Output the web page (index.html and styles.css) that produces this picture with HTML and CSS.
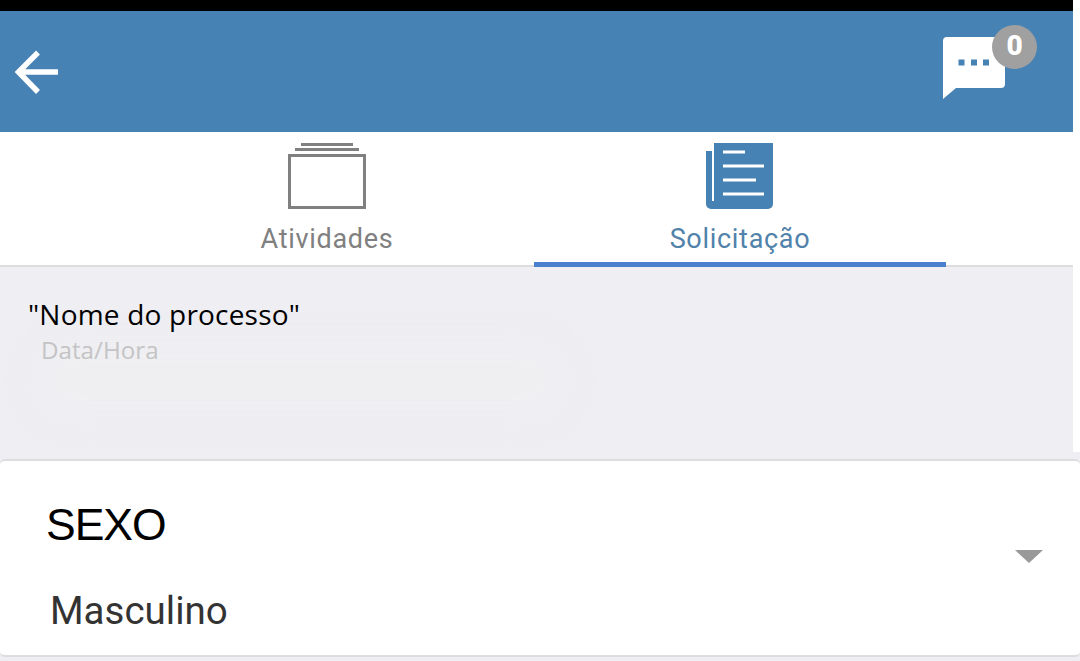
FILE: index.html
```html
<!DOCTYPE html>
<html>
  <head>
    <meta charset="UTF-8">
    <meta name="viewport" content="width=device-width, initial-scale=1.0">
    <title>Solicitação</title>
    <link rel="stylesheet" href="styles.css">
  </head>
  <body>
    <div class="upper">
      <div class="status-bar"></div>

      <header class="app-bar">
        <svg class="back-icon" width="46" height="48" viewBox="0 0 46 48">
          <path d="M44 23H5M24 3.500 4.500 23 24 43" fill="none" stroke="#fff" stroke-width="5.500"/>
        </svg>
        <div class="chat">
          <svg width="62" height="62" viewBox="0 0 62 62">
            <path d="M4 0H62V47a4 4 0 0 1-4 4H13L0 62V4a4 4 0 0 1 4-4Z" fill="#fff"/>
            <path d="M15.500 22.500h6v6h-6zM28 22.500h6v6h-6zM40 22.500h6v6h-6z" fill="#4682b4"/>
          </svg>
          <span class="badge">0</span>
        </div>
      </header>

      <nav class="tabs">
        <div class="tab">
          <svg width="78" height="66" viewBox="0 0 78 66">
            <path d="M13 1.500H65M7 6.500H71" fill="none" stroke="#808080" stroke-width="3"/>
            <rect x="1.500" y="12.500" width="75" height="52" fill="none" stroke="#808080" stroke-width="3"/>
          </svg>
          <span class="tab-label">Atividades</span>
        </div>
        <div class="tab tab-active">
          <svg width="68" height="66" viewBox="0 0 68 66">
            <path d="M8 0H67V61a5 5 0 0 1-5 5H5a5 5 0 0 1-5-5V8H6V58H8Z" fill="#4682b4"/>
            <path d="M17 9H39M17 23H58M17 37H50M17 51H58" fill="none" stroke="#fff" stroke-width="3"/>
          </svg>
          <span class="tab-label">Solicitação</span>
        </div>
      </nav>

      <section class="info">
        <div class="smudge"></div>
        <p class="process-name">"Nome do processo"</p>
        <p class="process-date">Data/Hora</p>
      </section>
    </div>

    <div class="lower">
      <div class="card">
        <div class="field">
          <div class="field-title">SEXO</div>
          <div class="field-value">Masculino</div>
        </div>
        <div class="arrow-down"></div>
      </div>
    </div>
  </body>
</html>
```

FILE: styles.css
```css
html, body {
  margin: 0;
  padding: 0;
  background-color: white;
  overflow: hidden;
}

.upper {
  width: 1073px;
}

.status-bar {
  height: 11px;
  background-color: black;
}

.app-bar {
  height: 121px;
  background-color: #4682b4;
  display: flex;
  justify-content: space-between;
  align-items: center;
  padding: 0 68px 0 14px;
  box-sizing: border-box;
}

.back-icon {
  margin-top: 2px;
}

.chat {
  position: relative;
  width: 62px;
  height: 62px;
  margin-top: -7px;
}

.chat svg {
  display: block;
}

.badge {
  position: absolute;
  left: 49px;
  top: -12px;
  width: 45px;
  height: 44px;
  border-radius: 50%;
  background-color: #a0a0a0;
  color: white;
  font-family: Roboto, sans-serif;
  font-weight: 900;
  font-size: 28px;
  line-height: 41px;
  text-align: center;
}

/* Tabs */
.tabs {
  height: 135px;
  box-sizing: border-box;
  border-bottom: 2px solid #dddde0;
  display: grid;
  grid-template-columns: 412px 412px;
  column-gap: 1px;
  padding-left: 121px;
}

.tab {
  display: flex;
  flex-direction: column;
  align-items: center;
  padding-top: 11px;
  height: 135px;
  box-sizing: border-box;
  color: #808080;
}

.tab svg {
  display: block;
}

.tab-label {
  font-family: Roboto, sans-serif;
  font-size: 27px;
  line-height: 32px;
  letter-spacing: 0.7px;
  margin-top: 14px;
}

.tab-active {
  color: #5082aa;
  border-bottom: 5px solid #4a7fd0;
}

/* Process block */
.info {
  position: relative;
  height: 185px;
  background-color: #eeeef3;
  overflow: hidden;
  padding: 29px 0 0 28px;
  box-sizing: border-box;
}

.smudge {
  position: absolute;
  left: 30px;
  top: 70px;
  width: 540px;
  height: 85px;
  border-radius: 40px;
  background-color: #efeff2;
  filter: blur(14px);
}

.process-name {
  position: relative;
  margin: 0;
  font-family: "Open Sans", sans-serif;
  font-size: 28px;
  letter-spacing: 0.2px;
  line-height: 36px;
  color: black;
}

.process-date {
  position: relative;
  margin: 0 0 0 13px;
  font-family: "Open Sans", sans-serif;
  font-size: 24.200px;
  line-height: 36px;
  color: #c4c4c6;
}

.lower {
  height: 209px;
  background-color: #eeeef3;
  padding-top: 7px;
  box-sizing: border-box;
}

/* Select card */
.card {
  height: 198px;
  box-sizing: border-box;
  background-color: white;
  border-top: 2px solid #dddde0;
  border-bottom: 2px solid #dddde0;
  border-radius: 5px;
  display: flex;
  justify-content: space-between;
  align-items: center;
  padding: 0 37px 0 46px;
}

.field {
  margin-top: 16px;
}

.field-title {
  font-family: "Liberation Sans", Arial, sans-serif;
  font-size: 44.500px;
  letter-spacing: -1px;
  line-height: 52px;
  color: black;
}

.field-value {
  font-family: Roboto, sans-serif;
  font-size: 38.500px;
  line-height: 44px;
  color: #333;
  margin: 38px 0 0 4px;
}

.arrow-down {
  width: 0;
  height: 0;
  border-left: 14px solid transparent;
  border-right: 14px solid transparent;
  border-top: 13px solid #999;
  margin-top: -4px;
}
```
